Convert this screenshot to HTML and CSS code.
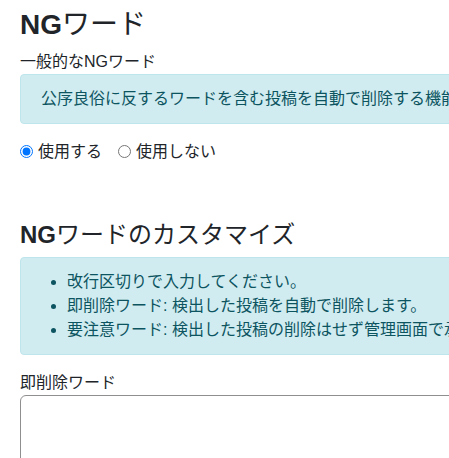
FILE: index.html
```html
<!DOCTYPE html>
<html lang="ja">
<head>
<meta charset="utf-8">
<title>NGワード</title>
<link rel="stylesheet" href="styles.css">
</head>
<body>
<div class="page">
  <section class="section">
    <h2 class="title"><span class="latin">NG</span>ワード</h2>
    <div class="field-label">一般的なNGワード</div>
    <div class="alert">公序良俗に反するワードを含む投稿を自動で削除する機能です。</div>
    <div class="radios">
      <label class="radio"><input type="radio" name="use" checked> <span>使用する</span></label>
      <label class="radio"><input type="radio" name="use"> <span>使用しない</span></label>
    </div>
  </section>
  <section class="section custom">
    <h3 class="title title-sm"><span class="latin">NG</span>ワードのカスタマイズ</h3>
    <div class="alert">
      <ul class="notes">
        <li>改行区切りで入力してください。</li>
        <li>即削除ワード: 検出した投稿を自動で削除します。</li>
        <li>要注意ワード: 検出した投稿の削除はせず管理画面で承認待ちにします。</li>
      </ul>
    </div>
    <div class="field-label">即削除ワード</div>
    <textarea class="textbox" rows="6"></textarea>
  </section>
</div>
</body>
</html>
```

FILE: styles.css
```css
html, body {
  margin: 0;
  padding: 0;
  overflow: hidden;
  background: #fff;
}
body {
  font-family: "Liberation Sans", "Noto Sans CJK JP", sans-serif;
  font-size: 16px;
  line-height: 1.5;
  color: #212529;
}
.page {
  width: 760px;
  padding: 8px 20px 0 20px;
}
.section {
  display: flex;
  flex-direction: column;
}
.custom {
  margin-top: 57px;
}
.title {
  margin: 0 0 8px 0;
  font-size: 28px;
  line-height: 1.2;
  font-weight: 400;
}
.title-sm {
  font-size: 24px;
}
.latin {
  font-weight: 700;
}
.field-label {
  margin: 0;
  white-space: nowrap;
}
.alert {
  background: #d1ecf1;
  border: 1px solid #bee5eb;
  color: #0c5460;
  border-radius: 4px;
  padding: 12px 20px;
  margin-bottom: 16px;
  white-space: nowrap;
}
.notes {
  margin: 0;
  padding-left: 26px;
}
.radios {
  display: flex;
  align-items: center;
  height: 24px;
}
.radio {
  display: flex;
  align-items: center;
  margin-right: 16px;
}
.radio input {
  margin: 0 5px 0 0;
  width: 13px;
  height: 13px;
  accent-color: #0075ff;
}
.textbox {
  height: 120px;
  border: 1px solid #8f8f8f;
  border-radius: 6px;
  font: inherit;
  resize: none;
}
```
